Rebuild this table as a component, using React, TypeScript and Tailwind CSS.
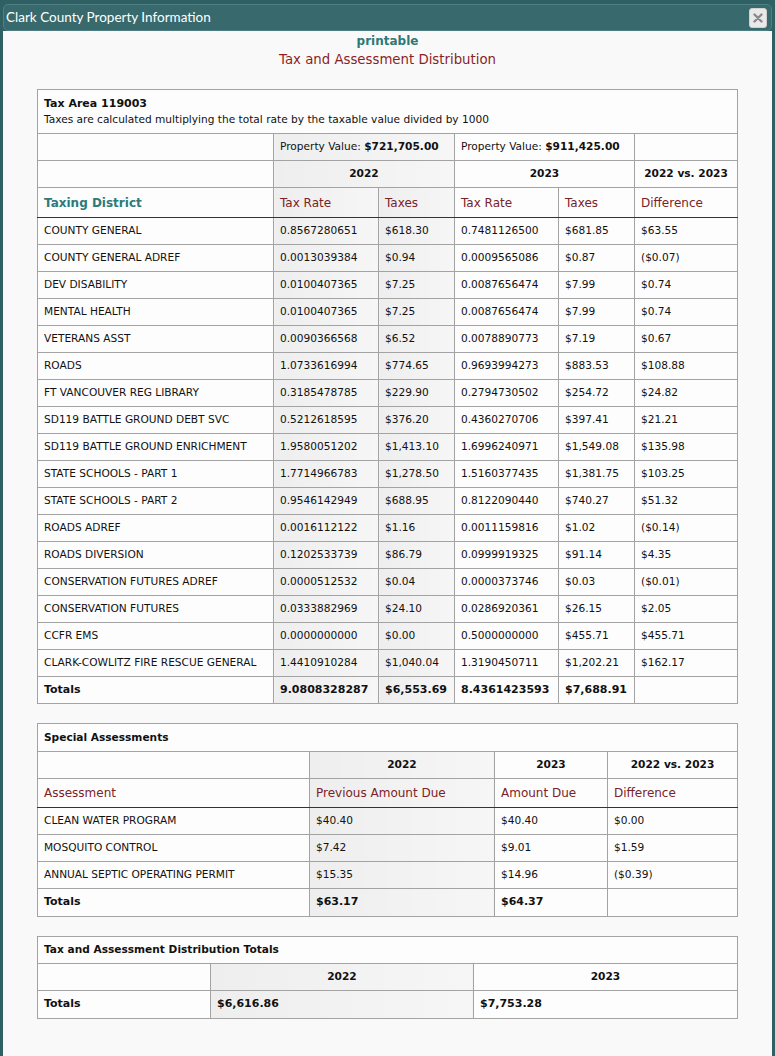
import React from 'react';

const F = "font-['Verdana','DejaVu_Sans',sans-serif]";
const td = 'border border-[#a3a3a3] px-[6px] align-middle whitespace-nowrap';
const gray = 'bg-gradient-to-r from-[#eeeeee] to-[#f6f6f6]';
const hdr = 'text-[#7a2328] text-[12px]';

const taxRows: [string, string, string, string, string, string][] = [
  ['COUNTY GENERAL', '0.8567280651', '$618.30', '0.7481126500', '$681.85', '$63.55'],
  ['COUNTY GENERAL ADREF', '0.0013039384', '$0.94', '0.0009565086', '$0.87', '($0.07)'],
  ['DEV DISABILITY', '0.0100407365', '$7.25', '0.0087656474', '$7.99', '$0.74'],
  ['MENTAL HEALTH', '0.0100407365', '$7.25', '0.0087656474', '$7.99', '$0.74'],
  ['VETERANS ASST', '0.0090366568', '$6.52', '0.0078890773', '$7.19', '$0.67'],
  ['ROADS', '1.0733616994', '$774.65', '0.9693994273', '$883.53', '$108.88'],
  ['FT VANCOUVER REG LIBRARY', '0.3185478785', '$229.90', '0.2794730502', '$254.72', '$24.82'],
  ['SD119 BATTLE GROUND DEBT SVC', '0.5212618595', '$376.20', '0.4360270706', '$397.41', '$21.21'],
  ['SD119 BATTLE GROUND ENRICHMENT', '1.9580051202', '$1,413.10', '1.6996240971', '$1,549.08', '$135.98'],
  ['STATE SCHOOLS - PART 1', '1.7714966783', '$1,278.50', '1.5160377435', '$1,381.75', '$103.25'],
  ['STATE SCHOOLS - PART 2', '0.9546142949', '$688.95', '0.8122090440', '$740.27', '$51.32'],
  ['ROADS ADREF', '0.0016112122', '$1.16', '0.0011159816', '$1.02', '($0.14)'],
  ['ROADS DIVERSION', '0.1202533739', '$86.79', '0.0999919325', '$91.14', '$4.35'],
  ['CONSERVATION FUTURES ADREF', '0.0000512532', '$0.04', '0.0000373746', '$0.03', '($0.01)'],
  ['CONSERVATION FUTURES', '0.0333882969', '$24.10', '0.0286920361', '$26.15', '$2.05'],
  ['CCFR EMS', '0.0000000000', '$0.00', '0.5000000000', '$455.71', '$455.71'],
  ['CLARK-COWLITZ FIRE RESCUE GENERAL', '1.4410910284', '$1,040.04', '1.3190450711', '$1,202.21', '$162.17'],
];

const assessRows: [string, string, string, string][] = [
  ['CLEAN WATER PROGRAM', '$40.40', '$40.40', '$0.00'],
  ['MOSQUITO CONTROL', '$7.42', '$9.01', '$1.59'],
  ['ANNUAL SEPTIC OPERATING PERMIT', '$15.35', '$14.96', '($0.39)'],
];

const CloseIcon = () => (
  <svg width="10" height="10" viewBox="0 0 10 10">
    <path d="M1.5 1.5 L8.5 8.5 M8.5 1.5 L1.5 8.5" stroke="#8a8a8a" strokeWidth="2.4" strokeLinecap="round" />
  </svg>
);

export default function App() {
  return (
    <div className={`w-[775px] h-[1056px] overflow-hidden bg-[#2f6064] px-[3px] pt-[4px] ${F}`}>
      <div className="h-[27px] rounded-[5px] bg-[#386a6d] border border-[#4f7f82] flex items-center justify-between pl-[2px] pr-[4px]">
        <span className="text-white text-[13.5px] font-['Lato',sans-serif]">Clark County Property Information</span>
        <div className="w-[18px] h-[20px] rounded-[3px] bg-[#e9e9e9] border border-[#d0d0d0] flex items-center justify-center">
          <CloseIcon />
        </div>
      </div>
      <div className="bg-[#f9f9f9] h-full text-[10.6px] text-[#111]">
        <div className="pt-[1px] text-center">
          <div className="text-[12px] font-bold text-[#2d7878] leading-[18px]">printable</div>
          <div className="text-[13.3px] text-[#8a1f26] leading-[20px]">Tax and Assessment Distribution</div>
        </div>

        <table className="mx-auto mt-[19px] w-[700px] table-fixed border-collapse bg-[#fdfdfd]">
          <colgroup>
            <col className="w-[236px]" />
            <col className="w-[105px]" />
            <col className="w-[76px]" />
            <col className="w-[104px]" />
            <col className="w-[76px]" />
            <col className="w-[103px]" />
          </colgroup>
          <tbody>
            <tr className="h-[44px]">
              <td colSpan={6} className={td}>
                <div className="font-bold text-[11px] leading-[16px]">Tax Area 119003</div>
                <div className="leading-[15px]">Taxes are calculated multiplying the total rate by the taxable value divided by 1000</div>
              </td>
            </tr>
            <tr className="h-[27px]">
              <td className={td}></td>
              <td colSpan={2} className={`${td} ${gray}`}>Property Value: <b>$721,705.00</b></td>
              <td colSpan={2} className={td}>Property Value: <b>$911,425.00</b></td>
              <td className={td}></td>
            </tr>
            <tr className="h-[27px] font-bold">
              <td className={td}></td>
              <td colSpan={2} className={`${td} ${gray} text-center`}>2022</td>
              <td colSpan={2} className={`${td} text-center`}>2023</td>
              <td className={`${td} text-center`}>2022 vs. 2023</td>
            </tr>
            <tr className="h-[30px] border-b-[1.5px] border-b-[#6e1b20]">
              <td className={`${td} border-b-[#6e1b20] font-bold text-[12px] text-[#2e7a7a]`}>Taxing District</td>
              <td className={`${td} border-b-[#6e1b20] ${gray} ${hdr}`}>Tax Rate</td>
              <td className={`${td} border-b-[#6e1b20] ${gray} ${hdr}`}>Taxes</td>
              <td className={`${td} border-b-[#6e1b20] ${hdr}`}>Tax Rate</td>
              <td className={`${td} border-b-[#6e1b20] ${hdr}`}>Taxes</td>
              <td className={`${td} border-b-[#6e1b20] ${hdr}`}>Difference</td>
            </tr>
            {taxRows.map((r) => (
              <tr key={r[0]} className="h-[27px]">
                <td className={td}>{r[0]}</td>
                <td className={`${td} ${gray}`}>{r[1]}</td>
                <td className={`${td} ${gray}`}>{r[2]}</td>
                <td className={td}>{r[3]}</td>
                <td className={td}>{r[4]}</td>
                <td className={td}>{r[5]}</td>
              </tr>
            ))}
            <tr className="h-[27px] font-bold text-[11px]">
              <td className={td}>Totals</td>
              <td className={`${td} ${gray}`}>9.0808328287</td>
              <td className={`${td} ${gray}`}>$6,553.69</td>
              <td className={td}>8.4361423593</td>
              <td className={td}>$7,688.91</td>
              <td className={td}></td>
            </tr>
          </tbody>
        </table>

        <table className="mx-auto mt-[19px] w-[700px] table-fixed border-collapse bg-[#fdfdfd]">
          <colgroup>
            <col className="w-[272px]" />
            <col className="w-[185px]" />
            <col className="w-[113px]" />
            <col className="w-[130px]" />
          </colgroup>
          <tbody>
            <tr className="h-[28px]">
              <td colSpan={4} className={`${td} font-bold`}>Special Assessments</td>
            </tr>
            <tr className="h-[27px] font-bold">
              <td className={td}></td>
              <td className={`${td} ${gray} text-center`}>2022</td>
              <td className={`${td} text-center`}>2023</td>
              <td className={`${td} text-center`}>2022 vs. 2023</td>
            </tr>
            <tr className="h-[29px] border-b-[1.5px] border-b-[#6e1b20]">
              <td className={`${td} border-b-[#6e1b20] ${hdr}`}>Assessment</td>
              <td className={`${td} border-b-[#6e1b20] ${gray} ${hdr}`}>Previous Amount Due</td>
              <td className={`${td} border-b-[#6e1b20] ${hdr}`}>Amount Due</td>
              <td className={`${td} border-b-[#6e1b20] ${hdr}`}>Difference</td>
            </tr>
            {assessRows.map((r) => (
              <tr key={r[0]} className="h-[27px]">
                <td className={td}>{r[0]}</td>
                <td className={`${td} ${gray}`}>{r[1]}</td>
                <td className={td}>{r[2]}</td>
                <td className={td}>{r[3]}</td>
              </tr>
            ))}
            <tr className="h-[28px] font-bold text-[11px]">
              <td className={td}>Totals</td>
              <td className={`${td} ${gray}`}>$63.17</td>
              <td className={td}>$64.37</td>
              <td className={td}></td>
            </tr>
          </tbody>
        </table>

        <table className="mx-auto mt-[19px] w-[700px] table-fixed border-collapse bg-[#fdfdfd]">
          <colgroup>
            <col className="w-[173px]" />
            <col className="w-[263px]" />
            <col className="w-[264px]" />
          </colgroup>
          <tbody>
            <tr className="h-[27px]">
              <td colSpan={3} className={`${td} font-bold`}>Tax and Assessment Distribution Totals</td>
            </tr>
            <tr className="h-[27px] font-bold">
              <td className={td}></td>
              <td className={`${td} ${gray} text-center`}>2022</td>
              <td className={`${td} text-center`}>2023</td>
            </tr>
            <tr className="h-[28px] font-bold text-[11px]">
              <td className={td}>Totals</td>
              <td className={`${td} ${gray}`}>$6,616.86</td>
              <td className={td}>$7,753.28</td>
            </tr>
          </tbody>
        </table>
      </div>
    </div>
  );
}
